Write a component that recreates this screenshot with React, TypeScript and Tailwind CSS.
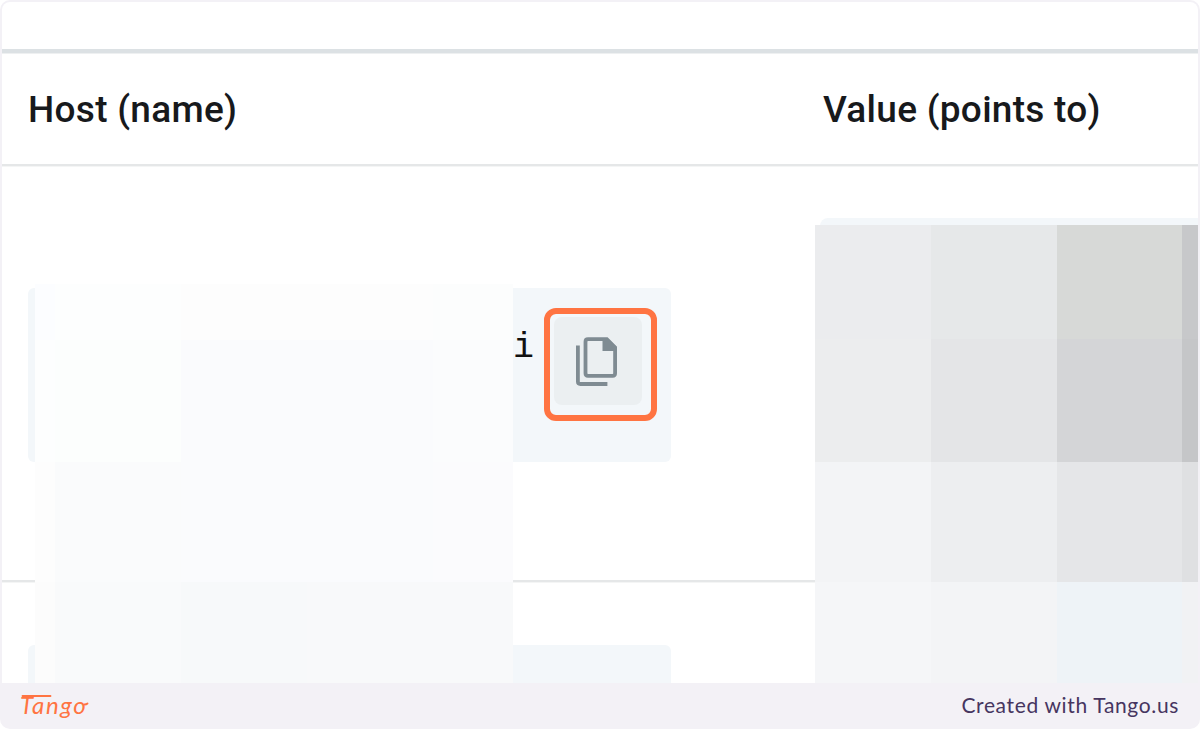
import React from 'react';

const hostMosaic = [
  'bg-[#fcfdff]', 'bg-[#fdfefe]', 'bg-[#fdfdfd]', 'bg-[#fdfdfd]', 'bg-[#fcfdfd]',
  'bg-[#fdfefe]', 'bg-[#fcfefd]', 'bg-[#fafbfd]', 'bg-[#fafbfd]', 'bg-[#fbfcfd]',
  'bg-[#fdfdfd]', 'bg-[#fafbfc]', 'bg-[#fafbfd]', 'bg-[#fafbfd]', 'bg-[#fbfbfd]',
  'bg-[#fcfcfc]', 'bg-[#f9fafb]', 'bg-[#f7f9fa]', 'bg-[#f8f9fa]', 'bg-[#f8f9fa]',
];

const valueMosaic = [
  'bg-[#ebecee]', 'bg-[#e6e8e9]', 'bg-[#d7d9d7]', 'bg-[#c7c8ca]',
  'bg-[#ecedee]', 'bg-[#e4e5e7]', 'bg-[#d4d5d7]', 'bg-[#c5c6c8]',
  'bg-[#f3f4f6]', 'bg-[#edeef0]', 'bg-[#e5e6e8]', 'bg-[#dfe0e2]',
  'bg-[#f5f6f8]', 'bg-[#f3f4f6]', 'bg-[#eef3f7]', 'bg-[#f1f2f4]',
];

const CopyIcon: React.FC = () => (
  <svg width="44" height="52" viewBox="0 0 44 52" fill="none" stroke="#7f8b92" strokeWidth="3.8">
    <path d="M12 4.2h18.8l8.3 8.3v25.8q0 2.5-2.5 2.5H12q-2.5 0-2.5-2.5V6.7q0-2.5 2.5-2.5z" />
    <path d="M26.5 3h5l9 8.7v4.3h-14z" fill="#7f8b92" stroke="none" />
    <path d="M1.9 10.5v36q0 2.5 2.5 2.5h27" />
  </svg>
);

const TangoLogo: React.FC = () => (
  <div className="relative h-8 w-[70px] text-[#ff7442]">
    <span className="absolute left-0 top-[-1px] font-['Lato'] text-[24px] font-normal italic leading-8 tracking-[1.6px]">
      Tango
    </span>
    {/* Long crossbar over the T */}
    <svg className="absolute left-0 top-0" width="70" height="32" fill="none" stroke="currentColor" strokeWidth="1.8">
      <path d="M2.5 6h28M64.5 14.5q2 0 3-1" strokeLinecap="round" />
    </svg>
  </div>
);

const App: React.FC = () => {
  return (
    <div className="flex h-[729px] w-[1200px] flex-col overflow-hidden rounded-[10px] bg-[#f3f1f6] font-['Roboto',sans-serif]">
      <div className="relative mx-0.5 mt-0.5 flex h-[681px] shrink-0 flex-col overflow-hidden rounded-t-lg bg-white">
        {/* Table header */}
        <div className="h-[47px] shrink-0"></div>
        <div className="h-[5px] shrink-0 border-b border-[#eef0f1] bg-[#dce1e4]"></div>
        <div className="flex h-[110px] shrink-0 items-center pl-[26px] pt-px text-[37px] font-medium leading-none tracking-[0.28px] text-[#17191c]">
          <div className="w-[795px] whitespace-nowrap">Host (name)</div>
          <div className="whitespace-nowrap">Value (points to)</div>
        </div>
        <div className="h-[3px] shrink-0 border-b border-[#f4f5f5] bg-[#e5e7e8]"></div>

        {/* First record */}
        <div className="flex h-[413px] shrink-0 pl-[26px]">
          <div className="mt-[121px] flex h-[174px] w-[643px] justify-end rounded-md bg-[#f3f7fa] pr-[14px] pt-5">
            <span className="mr-[10px] mt-[20px] font-['Liberation_Mono',monospace] text-[35px] leading-[40px] text-[#111]">i</span>
            <div className="flex size-[113px] items-center justify-center rounded-[12px] border-[6px] border-[#ff7442]">
              <div className="mb-[7px] mr-[5px] flex size-[88px] items-center justify-center rounded-lg bg-[#ebeff1]">
                <CopyIcon />
              </div>
            </div>
          </div>
          <div className="ml-[149px] mt-[51px] h-[300px] flex-1 rounded-tl-lg bg-[#f3f7fa]"></div>
        </div>
        <div className="h-[3px] shrink-0 border-b border-[#f4f5f5] bg-[#e5e7e8]"></div>

        {/* Second record */}
        <div className="flex flex-1 pl-[26px] pt-[62px]">
          <div className="w-[643px] rounded-t-md bg-[#f3f7fa]"></div>
        </div>

        {/* Redacted areas */}
        <div className="absolute bottom-0 left-[33px] grid grid-cols-[20px_126px_126px_126px_80px] grid-rows-[56px_122px_120px_101px]">
          {hostMosaic.map((color, i) => (
            <div key={i} className={color}></div>
          ))}
        </div>
        <div className="absolute bottom-0 right-0 grid grid-cols-[116px_126px_125px_16px] grid-rows-[114px_123px_120px_101px]">
          {valueMosaic.map((color, i) => (
            <div key={i} className={color}></div>
          ))}
        </div>
      </div>

      <div className="flex flex-1 items-center justify-between pl-5 pr-[21px]">
        <TangoLogo />
        <span className="mb-0.5 font-['Lato'] text-[21px] tracking-[0.65px] text-[#463560]">Created with Tango.us</span>
      </div>
    </div>
  );
};

export default App;
